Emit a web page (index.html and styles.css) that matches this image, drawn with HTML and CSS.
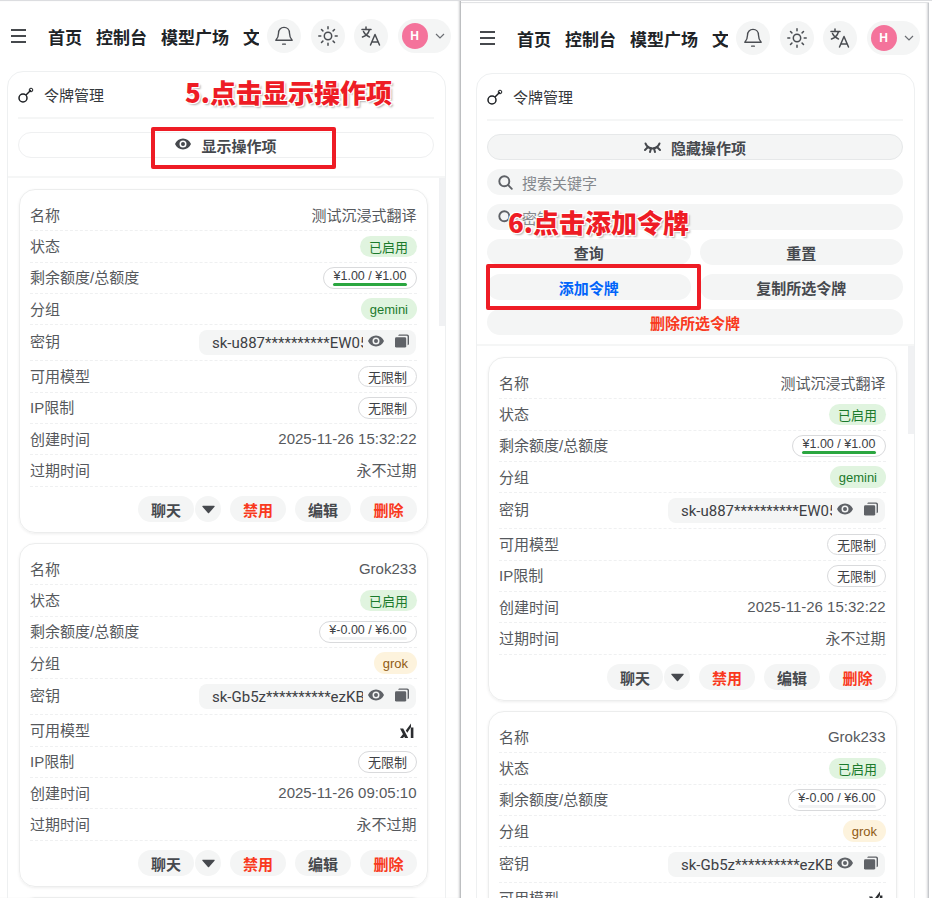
FILE: index.html
```html
<!DOCTYPE html>
<html lang="zh-CN">
<head>
  <meta charset="UTF-8">
  <meta name="viewport" content="width=device-width, initial-scale=1">
  <title>令牌管理</title>
  <link rel="stylesheet" href="styles.css">
</head>
<body>
  <svg class="defs" width="0" height="0">
    <symbol id="i-eye" viewBox="0 0 16 12"><path fill="currentColor" fill-rule="evenodd" d="M8 .5C4.400.5 1.400 2.600 0 6c1.400 3.400 4.400 5.500 8 5.500s6.600-2.100 8-5.500C14.600 2.600 11.600.5 8 .5zm0 9a3.500 3.500 0 1 1 0-7 3.500 3.500 0 0 1 0 7zM8 4a2 2 0 1 0 0 4 2 2 0 0 0 0-4z"/></symbol>
    <symbol id="i-copy" viewBox="0 0 15 14"><path fill="currentColor" d="M4.500 0H13a2 2 0 0 1 2 2v8a1.500 1.500 0 0 1-1.500 1.500V2.500A1 1 0 0 0 12.500 1.500H3.500A1.500 1.500 0 0 1 4.500 0z"/><rect fill="currentColor" x="0" y="3" width="12" height="11" rx="1.500"/></symbol>
    <symbol id="i-caret" viewBox="0 0 14 9"><path fill="currentColor" d="M1 .5h12c.6 0 .9.7.5 1.100L7.600 8.200a.8.8 0 0 1-1.200 0L.5 1.600C.1 1.200.4.5 1 .5z"/></symbol>
    <symbol id="i-xai" viewBox="0 0 14 16"><path fill="currentColor" d="M0 5.500h3.200l5 9.500H5zM0 15l3.400-4.600 1.500 2.400L3 15zM5.800 7.400L11 .5v3.600L7.300 9.800zM10.800 4.500h2.600V15h-2.600z"/></symbol>
    <symbol id="i-bell" viewBox="0 0 20 22"><path fill="none" stroke="currentColor" stroke-width="1.500" stroke-linejoin="round" d="M10 1.500c-3.600 0-6 2.700-6 6.200 0 4.500-1.500 6.300-3 8h18c-1.500-1.700-3-3.500-3-8 0-3.500-2.400-6.200-6-6.200z"/><path fill="none" stroke="currentColor" stroke-width="1.500" stroke-linecap="round" d="M8.500 20h3"/></symbol>
    <symbol id="i-sun" viewBox="0 0 20 20"><g fill="none" stroke="currentColor" stroke-width="1.500" stroke-linecap="round"><circle cx="10" cy="10" r="3.700"/><path d="M10 .8v2M10 17.200v2M.8 10h2M17.200 10h2M3.500 3.500l1.400 1.400M15.100 15.100l1.400 1.400M3.500 16.500l1.400-1.400M15.100 4.900l1.400-1.400"/></g></symbol>
    <symbol id="i-lang" viewBox="0 0 20 20"><g fill="none" stroke="currentColor" stroke-width="1.500" stroke-linecap="round" stroke-linejoin="round"><path d="M1 3.500h9M5 1v2.500M8.500 3.500C7.500 7.500 4.500 10 1.500 11M2.500 5.500c1 2.500 3.500 4.500 6 5.500M9.500 19l4.500-10.500L18.500 19M11 16h6"/></g></symbol>
    <symbol id="i-key" viewBox="0 0 16 16"><g fill="none" stroke="currentColor" stroke-width="1.500"><circle cx="5" cy="11" r="4"/><path d="M8 8l5-5"/><circle cx="13" cy="3" r="1.800" stroke-width="1"/></g></symbol>
    <symbol id="i-search" viewBox="0 0 15 15"><g fill="none" stroke="currentColor" stroke-width="1.900" stroke-linecap="round"><circle cx="6.300" cy="6.300" r="5"/><path d="M10.200 10.200l3.600 3.600"/></g></symbol>
    <symbol id="i-lash" viewBox="0 0 17 11"><g fill="none" stroke="currentColor" stroke-width="2" stroke-linecap="round"><path d="M1.500 1.500C3 5 5.500 6.500 8.500 6.500s5.500-1.500 7-5"/><path d="M1 8l3-3M6 10l1-3.500M11 10l-1-3.500M16 8l-3-3"/></g></symbol>
  </svg>

  <div class="screens">
    <!-- 左边: 操作项收起 -->
    <section class="panel panel-left">
      <header class="topbar">
        <div class="burger"><span></span><span></span><span></span></div>
        <nav class="nav"><a>首页</a><a>控制台</a><a>模型广场</a><a>文档</a></nav>
        <div class="tools">
          <span class="round"><svg class="i20"><use href="#i-bell"/></svg></span>
          <span class="round"><svg class="i20"><use href="#i-sun"/></svg></span>
          <span class="round"><svg class="i20"><use href="#i-lang"/></svg></span>
          <span class="user"><span class="avatar">H</span><svg class="chev" viewBox="0 0 10 6"><path d="M1 1l4 4 4-4"/></svg></span>
        </div>
      </header>
      <div class="box">
        <div class="box-title"><svg class="i-key"><use href="#i-key"/></svg><span>令牌管理</span></div>
        <div class="actions">
          <button class="btn-toggle btn-toggle-plain"><svg class="i-eye-lg"><use href="#i-eye"/></svg>显示操作项</button>
        </div>
        <div class="scroller">
          <i class="scrollbar"></i>
          <article class="token">
            <div class="row"><label>名称</label><span class="val">测试沉浸式翻译</span></div>
            <div class="row"><label>状态</label><span class="tag tag-green">已启用</span></div>
            <div class="row"><label>剩余额度/总额度</label><span class="quota">¥1.00 / ¥1.00<i class="bar bar-green"></i></span></div>
            <div class="row"><label>分组</label><span class="tag tag-green">gemini</span></div>
            <div class="row row-key"><label>密钥</label><span class="key"><em>sk-u887**********EW05pQ</em><svg class="i-eye"><use href="#i-eye"/></svg><svg class="i-copy"><use href="#i-copy"/></svg></span></div>
            <div class="row"><label>可用模型</label><span class="tag tag-line">无限制</span></div>
            <div class="row"><label>IP限制</label><span class="tag tag-line">无限制</span></div>
            <div class="row"><label>创建时间</label><span class="val">2025-11-26 15:32:22</span></div>
            <div class="row"><label>过期时间</label><span class="val">永不过期</span></div>
            <div class="btns"><button>聊天</button><button class="caret"><svg><use href="#i-caret"/></svg></button><button class="danger">禁用</button><button>编辑</button><button class="danger">删除</button></div>
          </article>
          <article class="token">
            <div class="row"><label>名称</label><span class="val">Grok233</span></div>
            <div class="row"><label>状态</label><span class="tag tag-green">已启用</span></div>
            <div class="row"><label>剩余额度/总额度</label><span class="quota">¥-0.00 / ¥6.00<i class="bar"></i></span></div>
            <div class="row"><label>分组</label><span class="tag tag-amber">grok</span></div>
            <div class="row row-key"><label>密钥</label><span class="key"><em>sk-Gb5z**********ezKB</em><svg class="i-eye"><use href="#i-eye"/></svg><svg class="i-copy"><use href="#i-copy"/></svg></span></div>
            <div class="row"><label>可用模型</label><svg class="i-xai"><use href="#i-xai"/></svg></div>
            <div class="row"><label>IP限制</label><span class="tag tag-line">无限制</span></div>
            <div class="row"><label>创建时间</label><span class="val">2025-11-26 09:05:10</span></div>
            <div class="row"><label>过期时间</label><span class="val">永不过期</span></div>
            <div class="btns"><button>聊天</button><button class="caret"><svg><use href="#i-caret"/></svg></button><button class="danger">禁用</button><button>编辑</button><button class="danger">删除</button></div>
          </article>
          <article class="token"></article>
        </div>
      </div>
      <div class="note note-5">5.点击显示操作项</div>
      <div class="mark mark-5"></div>
    </section>

    <!-- 右边: 操作项展开 -->
    <section class="panel panel-right">
      <header class="topbar">
        <div class="burger"><span></span><span></span><span></span></div>
        <nav class="nav"><a>首页</a><a>控制台</a><a>模型广场</a><a>文档</a></nav>
        <div class="tools">
          <span class="round"><svg class="i20"><use href="#i-bell"/></svg></span>
          <span class="round"><svg class="i20"><use href="#i-sun"/></svg></span>
          <span class="round"><svg class="i20"><use href="#i-lang"/></svg></span>
          <span class="user"><span class="avatar">H</span><svg class="chev" viewBox="0 0 10 6"><path d="M1 1l4 4 4-4"/></svg></span>
        </div>
      </header>
      <div class="box">
        <div class="box-title"><svg class="i-key"><use href="#i-key"/></svg><span>令牌管理</span></div>
        <div class="actions actions-open">
          <button class="btn-toggle"><svg class="i-lash"><use href="#i-lash"/></svg>隐藏操作项</button>
          <div class="field"><svg class="i-search"><use href="#i-search"/></svg>搜索关键字</div>
          <div class="field"><svg class="i-search"><use href="#i-search"/></svg>密钥</div>
          <div class="grid">
            <button>查询</button>
            <button>重置</button>
            <button class="primary">添加令牌</button>
            <button>复制所选令牌</button>
            <button class="danger wide">删除所选令牌</button>
          </div>
        </div>
        <div class="scroller">
          <i class="scrollbar"></i>
          <article class="token">
            <div class="row"><label>名称</label><span class="val">测试沉浸式翻译</span></div>
            <div class="row"><label>状态</label><span class="tag tag-green">已启用</span></div>
            <div class="row"><label>剩余额度/总额度</label><span class="quota">¥1.00 / ¥1.00<i class="bar bar-green"></i></span></div>
            <div class="row"><label>分组</label><span class="tag tag-green">gemini</span></div>
            <div class="row row-key"><label>密钥</label><span class="key"><em>sk-u887**********EW05pQ</em><svg class="i-eye"><use href="#i-eye"/></svg><svg class="i-copy"><use href="#i-copy"/></svg></span></div>
            <div class="row"><label>可用模型</label><span class="tag tag-line">无限制</span></div>
            <div class="row"><label>IP限制</label><span class="tag tag-line">无限制</span></div>
            <div class="row"><label>创建时间</label><span class="val">2025-11-26 15:32:22</span></div>
            <div class="row"><label>过期时间</label><span class="val">永不过期</span></div>
            <div class="btns"><button>聊天</button><button class="caret"><svg><use href="#i-caret"/></svg></button><button class="danger">禁用</button><button>编辑</button><button class="danger">删除</button></div>
          </article>
          <article class="token">
            <div class="row"><label>名称</label><span class="val">Grok233</span></div>
            <div class="row"><label>状态</label><span class="tag tag-green">已启用</span></div>
            <div class="row"><label>剩余额度/总额度</label><span class="quota">¥-0.00 / ¥6.00<i class="bar"></i></span></div>
            <div class="row"><label>分组</label><span class="tag tag-amber">grok</span></div>
            <div class="row row-key"><label>密钥</label><span class="key"><em>sk-Gb5z**********ezKB</em><svg class="i-eye"><use href="#i-eye"/></svg><svg class="i-copy"><use href="#i-copy"/></svg></span></div>
            <div class="row"><label>可用模型</label><svg class="i-xai"><use href="#i-xai"/></svg></div>
          </article>
        </div>
      </div>
      <div class="note note-6">6.点击添加令牌</div>
      <div class="mark mark-6"></div>
    </section>
  </div>
</body>
</html>
```

FILE: styles.css
```css
* {
  box-sizing: border-box;
}
html, body {
  margin: 0;
  height: 898px;
  overflow: hidden;
}
body {
  background: #fff;
  color: #1c1f23;
  font-family: "Liberation Sans", "Noto Sans CJK SC", sans-serif;
  font-size: 15px;
}
.defs {
  position: absolute;
}
.screens {
  display: flex;
  height: 898px;
  border-top: 1px solid #dcdde0;
}
.panel {
  position: relative;
  height: 897px;
  overflow: hidden;
  background: #fff;
}
.panel-left {
  width: 461px;
  padding-left: 7px;
  box-shadow: inset -3px 0 3px -2px #9a9ca0;
}
.panel-right {
  width: 468px;
  margin-top: 1px;
  padding-left: 15px;
  border-top: 1px solid #e2e3e5;
  box-shadow: inset -3px 0 3px -2px #a8aab0;
}

/* top bar */
.topbar {
  display: flex;
  align-items: center;
  height: 70px;
  padding-bottom: 1px;
}
.burger {
  display: flex;
  flex-direction: column;
  gap: 4px;
  width: 15px;
  margin-left: 4px;
}
.burger span {
  height: 2px;
  background: #46494d;
}
.nav {
  display: flex;
  gap: 14px;
  width: 211px;
  margin-left: 22px;
  padding-top: 2px;
  overflow: hidden;
  white-space: nowrap;
  font-size: 17px;
  font-weight: 700;
  color: #202327;
}
.nav a {
  flex: none;
}
.tools {
  display: flex;
  align-items: center;
  gap: 9.500px;
  margin-left: 8px;
}
.round {
  display: flex;
  align-items: center;
  justify-content: center;
  width: 34px;
  height: 34px;
  border-radius: 50%;
  background: #f4f5f5;
  color: #4a4d52;
}
.i20 {
  width: 20px;
  height: 20px;
}
.user {
  display: flex;
  align-items: center;
  width: 53px;
  height: 34px;
  padding-left: 4px;
  border-radius: 17px;
  background: #f4f5f5;
}
.avatar {
  display: flex;
  align-items: center;
  justify-content: center;
  width: 26px;
  height: 26px;
  border-radius: 50%;
  background: #f4739b;
  color: #fff;
  font-size: 12px;
  font-weight: 700;
}
.chev {
  width: 10px;
  height: 6px;
  margin-left: 7px;
  fill: none;
  stroke: #6b6e73;
  stroke-width: 1.200;
}

/* main box */
.box {
  width: 439px;
  height: 900px;
  border: 1px solid #eef0f1;
  border-radius: 16px;
}
.box-title {
  display: flex;
  align-items: center;
  gap: 10px;
  height: 47px;
  margin: 0 11px 0 10px;
  border-bottom: 2px solid #f5f6f6;
  color: #35383c;
}
.i-key {
  width: 16px;
  height: 16px;
  color: #1c1f23;
}
.actions {
  height: 59px;
  padding: 13px 11px 0 10px;
  border-bottom: 2px solid #f5f6f6;
}
.actions-open {
  display: flex;
  flex-direction: column;
  gap: 9px;
  height: 225px;
}
button {
  font: inherit;
  cursor: pointer;
}
.btn-toggle {
  display: flex;
  align-items: center;
  justify-content: center;
  gap: 10px;
  flex: none;
  height: 26px;
  width: 100%;
  border: 1px solid #e6e8e9;
  border-radius: 13px;
  background: #f4f5f5;
  color: #46494e;
  font-weight: 700;
}
.btn-toggle-plain {
  padding-top: 2px;
  background: #fff;
  border-color: #eff0f1;
}
.i-eye-lg {
  width: 16px;
  height: 12px;
  margin-top: -4px;
}
.i-lash {
  width: 17px;
  height: 11px;
}
.field {
  display: flex;
  align-items: center;
  gap: 9px;
  flex: none;
  height: 26px;
  padding-left: 11px;
  border-radius: 13px;
  background: #f4f5f5;
  color: #85888d;
}
.i-search {
  width: 15px;
  height: 15px;
  color: #5e6166;
}
.grid {
  display: grid;
  grid-template-columns: 1fr 1fr;
  gap: 9px;
}
.grid button {
  height: 26px;
  border: 0;
  border-radius: 13px;
  background: #f4f5f5;
  color: #46494e;
  font-weight: 700;
}
.grid .wide {
  grid-column: 1 / 3;
}
.grid .primary {
  color: #0064fa;
}
.grid .danger, .btns .danger {
  color: #f93920;
}

/* token list */
.scroller {
  position: relative;
  padding: 11px 17px 0 11px;
}
.scrollbar {
  position: absolute;
  top: 0;
  right: 0;
  width: 6px;
  height: 148px;
  background: #f0f1f3;
}
.panel-right .scrollbar {
  height: 88px;
}
.token {
  height: 344px;
  margin-bottom: 10px;
  padding: 10px;
  border: 1px solid #eceded;
  border-radius: 16px;
  box-shadow: 0 1px 3px rgba(0, 0, 0, 0.07);
}
.row {
  display: flex;
  align-items: center;
  justify-content: space-between;
  height: 31.350px;
  border-bottom: 1px dashed #eff0f1;
  color: #56595d;
}
.row label, .row .val {
  margin-top: -2px;
  color: #56595d;
}
.row .val {
  margin-right: 0.500px;
}
.row-key {
  align-items: flex-start;
  height: 36px;
  padding-top: 5px;
}
.row-key label {
  margin-top: 0;
}
.tag {
  display: flex;
  align-items: center;
  justify-content: center;
  height: 21.500px;
  padding: 0 9px;
  border-radius: 11px;
  font-size: 13px;
}
.tag-green {
  background: #e0f4df;
  color: #1b7a2c;
}
.tag-amber {
  background: #fdf3dd;
  color: #8f5b14;
}
.tag-line {
  border: 1px solid #d9dadc;
  color: #3d4044;
}
.quota {
  position: relative;
  height: 21.500px;
  padding: 0 9.500px;
  border: 1px solid #d9dadc;
  border-radius: 11px;
  font-size: 12.500px;
  line-height: 16px;
  color: #3d4044;
}
.bar {
  position: absolute;
  left: 9px;
  right: 9px;
  bottom: 2px;
  height: 3px;
  border-radius: 2px;
  background: #f2f3f4;
}
.bar-green {
  background: #2ba640;
}
.key {
  display: flex;
  align-items: center;
  width: 217px;
  height: 25px;
  margin-top: -0.500px;
  margin-right: 1px;
  padding-left: 13px;
  border-radius: 8px;
  background: #f4f5f5;
  color: #3d4044;
}
.key em {
  width: 151px;
  overflow: hidden;
  font-family: Roboto, "Noto Sans CJK SC", sans-serif;
  font-style: normal;
  white-space: nowrap;
  margin-top: 2px;
}
.i-eye {
  width: 16px;
  height: 12px;
  margin-left: 5px;
  margin-top: -3px;
  color: #5f6267;
}
.i-copy {
  width: 14px;
  height: 14px;
  margin-left: 11px;
  margin-top: -3px;
  color: #5f6267;
}
.i-xai {
  width: 14px;
  height: 16px;
  margin-right: 3px;
  color: #2b2d30;
}
.btns {
  display: flex;
  justify-content: flex-end;
  gap: 9px;
  margin-top: 9.500px;
}
.btns button {
  width: 56px;
  height: 26px;
  padding: 0;
  border: 0;
  border-radius: 13px;
  background: #f4f5f5;
  color: #46494e;
  font-weight: 700;
}
.btns button:last-child {
  width: 57px;
}
.btns .caret {
  display: flex;
  align-items: center;
  justify-content: center;
  width: 26px;
  margin-left: -8px;
}
.caret svg {
  width: 13px;
  height: 9px;
  color: #46494e;
}

/* red notes drawn on top of the screenshots */
.note {
  position: absolute;
  font-family: "Noto Sans CJK SC", sans-serif;
  font-size: 26px;
  font-weight: 900;
  line-height: 30px;
  color: #ee1c25;
  white-space: nowrap;
  text-shadow: 1px 1px 0 #fff, -1px -1px 0 #fff, 1px -1px 0 #fff, -1px 1px 0 #fff, 2px 2px 2px rgba(0, 0, 0, 0.3);
}
.note-5 {
  left: 185px;
  top: 76px;
}
.note-6 {
  left: 47px;
  top: 204px;
}
.mark {
  position: absolute;
  border: 4px solid #ee1c25;
  border-radius: 2px;
}
.mark-5 {
  left: 151px;
  top: 126px;
  width: 185px;
  height: 42px;
}
.mark-6 {
  left: 25px;
  top: 261px;
  width: 215px;
  height: 46px;
}
```
